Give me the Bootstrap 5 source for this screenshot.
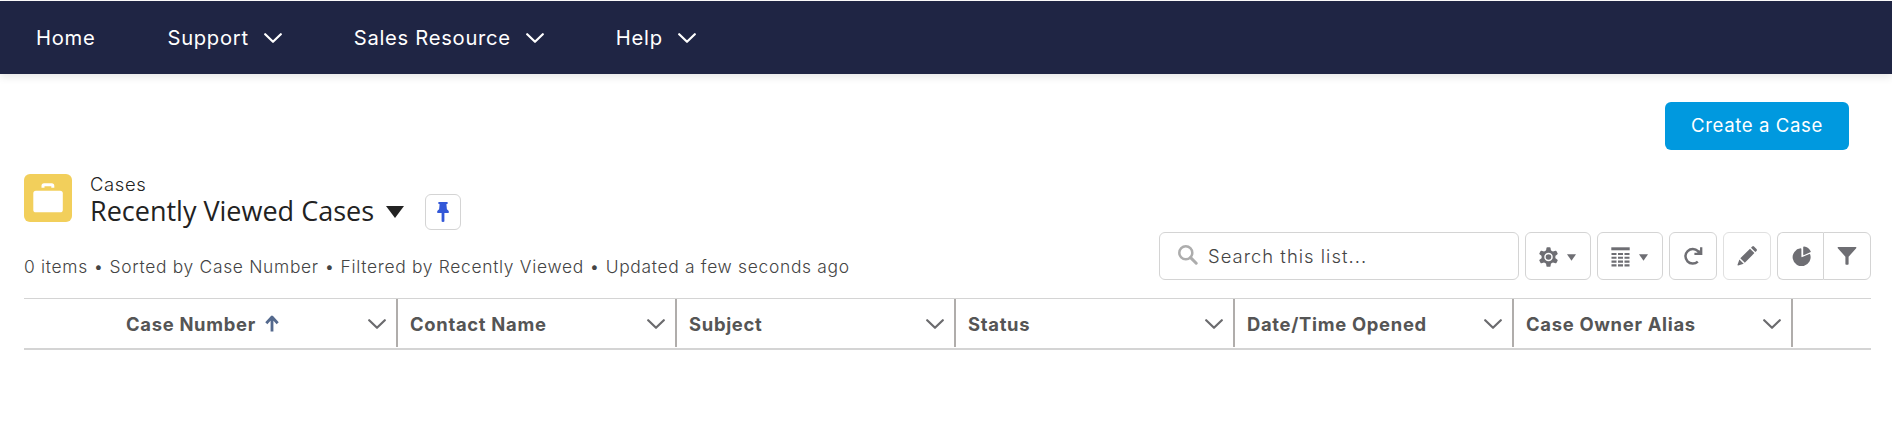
<!DOCTYPE html>
<html lang="en">
<head>
<meta charset="utf-8">
<meta name="viewport" content="width=device-width, initial-scale=1">
<title>Recently Viewed Cases</title>
<link href="https://cdn.jsdelivr.net/npm/bootstrap@5.3.0/dist/css/bootstrap.min.css" rel="stylesheet">
<style>
body{font-family:"Inter","Liberation Sans",sans-serif;font-size:18px;line-height:24px;color:#222;background:#fff;padding-top:1px;overflow:hidden}
svg{display:block;flex:none}
.site-nav{height:73px;background:#1f2544;padding:0 0 0 36px;box-shadow:0 3px 8px rgba(0,0,0,.1)}
.site-nav .nav-link{color:#fff;font-size:20.2px;letter-spacing:.72px;padding:0;gap:15px}
.site-nav .nav-item{margin-right:72px}
.action-row{height:76px;padding:0 43px 0 0}
.btn-create{width:184px;height:48px;background:#0099df;color:#fff;border:0;border-radius:6px;font-size:18.6px;letter-spacing:.6px;padding:0}
.btn-create:hover{background:#0084c2;color:#fff}
.list-head{padding:0 21px 0 24px;height:148px}
.case-icon{width:48px;height:48px;border-radius:6px;background:#f2cf5b}
.entity{font-weight:300;font-size:18.4px;letter-spacing:.65px;line-height:22px;margin-top:-1px}
.view-title{font:400 27px/32px "Open Sans",sans-serif;letter-spacing:0;margin:-2px 0 0}
.tool{height:48px;border:1px solid #d4d4d4;border-radius:6px;background:#fff;padding:0;color:#6e6e73}
.pin-btn{width:36px;height:36px}
.meta-line{font-size:17.4px;font-weight:300;letter-spacing:.7px;color:#444;white-space:nowrap}
.search-box{width:360px;padding-left:18px}
.search-box span{font-weight:300;font-size:18.4px;letter-spacing:1.03px;color:#444}
.split .tool:first-child{width:46px;border-right:0;border-radius:6px 0 0 6px}
.split .tool:last-child{width:48px;border-radius:0 6px 6px 0}
.cols{margin:0 21px 0 24px;height:52px;border-top:1px solid #d4d4d4;border-bottom:2px solid #d4d4d4;color:#555;font-size:18.4px;font-weight:650;letter-spacing:.7px}
.cols svg{color:#6b6b6e}
.col-head{width:279px;height:48px;border-right:2px solid #b0adab;padding:1px 10px 0 12px}
.col-head.first-col{width:374px;padding-left:102px}
</style>
</head>
<body>
<nav class="site-nav d-flex align-items-center">
  <ul class="nav flex-nowrap">
    <li class="nav-item"><a class="nav-link" href="#">Home</a></li>
    <li class="nav-item"><a class="nav-link d-flex align-items-center" href="#">Support <svg width="18" height="12" viewBox="0 0 18 12"><use href="#chev"/></svg></a></li>
    <li class="nav-item"><a class="nav-link d-flex align-items-center" href="#">Sales Resource <svg width="18" height="12" viewBox="0 0 18 12"><use href="#chev"/></svg></a></li>
    <li class="nav-item"><a class="nav-link d-flex align-items-center" href="#">Help <svg width="18" height="12" viewBox="0 0 18 12"><use href="#chev"/></svg></a></li>
  </ul>
</nav>
<svg width="0" height="0" class="position-absolute"><defs>
  <path id="chev" d="M1.2 2.2 L9 9.8 L16.8 2.2" fill="none" stroke="currentColor" stroke-width="2.2" stroke-linecap="round" stroke-linejoin="round"/>
</defs></svg>

<div class="action-row d-flex justify-content-end align-items-end">
  <button class="btn btn-create">Create a Case</button>
</div>

<header class="list-head d-flex justify-content-between">
  <div>
    <div class="d-flex pt-4">
      <div class="case-icon">
        <svg width="48" height="48" viewBox="0 0 48 48" fill="#fff"><path d="M17.5 13.8v-2q0-2.6 2.6-2.6h7.6q2.6 0 2.6 2.6v2h-3v-1.6h-6.8v1.6z"/><rect x="9.3" y="16.8" width="29.5" height="21.5" rx="2.6"/></svg>
      </div>
      <div style="margin-left:18px">
        <div class="entity">Cases</div>
        <div class="d-flex align-items-center" style="height:36px;margin-top:-1px">
          <h1 class="view-title">Recently Viewed Cases</h1>
          <svg width="18" height="12" viewBox="0 0 18 12" fill="#222" style="margin-left:12px"><path d="M0 0h18L9 12z"/></svg>
          <button class="btn tool pin-btn d-flex align-items-center justify-content-center" aria-label="Pin" style="margin-left:21px">
            <svg width="12" height="20" viewBox="0 0 12 20" fill="#3358d8"><path d="M2 0h8q.8 0 .8.9T10 2l-.6.3.5 5 1.4 1.1q.6.5.6 1.8 0 .8-.8.8H7.4v8.2q0 .8-1.4.8t-1.4-.8V11H.9q-.8 0-.8-.8 0-1.3.6-1.8l1.4-1.1.5-5L2 2q-.8-.2-.8-1.1T2 0z"/></svg>
          </button>
        </div>
      </div>
    </div>
    <div class="meta-line" style="margin-top:25px">0 items • Sorted by Case Number • Filtered by Recently Viewed • Updated a few seconds ago</div>
  </div>
  <div class="d-flex align-items-end" style="gap:6px;padding-bottom:18px">
    <div class="tool search-box d-flex align-items-center">
      <svg width="20" height="20" viewBox="0 0 20 20" fill="none" stroke="#adadad" stroke-width="2.5" style="margin-top:-2px"><circle cx="7.8" cy="7.8" r="6.5"/><path d="M12.6 12.6l5.6 5.6" stroke-width="3" stroke-linecap="round"/></svg>
      <span style="margin-left:10px;margin-top:-1px">Search this list...</span>
    </div>
    <button class="btn tool d-flex align-items-center" aria-label="List controls" style="width:66px;padding:2px 0 0 13px;gap:9px">
      <svg width="19" height="20" viewBox="-9.5 -10 19 20" fill="currentColor"><circle r="5.6" fill="none" stroke="currentColor" stroke-width="2.7"/><circle r="2.8"/><g id="teeth"><path id="tooth" d="M-2-9.2q.2-.6.8-.6h2.4q.6 0 .8.6l.6 3.4h-5.2z"/><use href="#tooth" transform="rotate(60)"/><use href="#tooth" transform="rotate(120)"/></g><use href="#teeth" transform="rotate(180)"/></svg>
      <svg width="9" height="7" viewBox="0 0 9 7" fill="currentColor"><path d="M0 .3h9L4.5 6.7z"/></svg>
    </button>
    <button class="btn tool d-flex align-items-center" aria-label="Display as" style="width:66px;padding:2px 0 0 13px;gap:9px">
      <svg width="19" height="20" viewBox="0 0 19 20" fill="none" stroke="currentColor"><path d="M.3 1.8h18.4" stroke-width="3"/><path d="M.5 7h18M.5 10.8h18M.5 14.6h18M.5 18.4h18" stroke-width="2.1" stroke-dasharray="5 1.5"/></svg>
      <svg width="9" height="7" viewBox="0 0 9 7" fill="currentColor"><path d="M0 .3h9L4.5 6.7z"/></svg>
    </button>
    <button class="btn tool d-flex align-items-center justify-content-center" aria-label="Refresh" style="width:48px">
      <svg width="20" height="20" viewBox="0 0 20 20" fill="none" stroke="currentColor" stroke-width="2.5"><path d="M14.8 15.6A7.3 7.3 0 1 1 15 5.2l2 2"/><path d="M18.2 1.2v6.6h-6.8" stroke-width="2.3"/><path d="M17.5 3.5v4h-4z" fill="currentColor" stroke="none"/></svg>
    </button>
    <button class="btn tool d-flex align-items-center justify-content-center" aria-label="Edit" style="width:48px;border-color:#e0e0e0">
      <svg width="20" height="20" viewBox="0 0 20 20" fill="currentColor"><path d="M3.3 12.3L13 2.7l4.4 4.4-9.6 9.6zM14 1.7L15.2.5q.9-.8 1.8 0l2.5 2.5q.9.9 0 1.9l-1.2 1.2zM2.4 13.4l4.3 4.3-5.5 1.8q-.9.1-.7-.7z"/></svg>
    </button>
    <div class="split d-flex">
      <button class="btn tool d-flex align-items-center justify-content-center" aria-label="Show charts">
        <svg width="20" height="20" viewBox="0 0 20 20" fill="currentColor" style="margin-left:2px"><path d="M8.6 2.3q.8 0 .8.8v7.4q0 1 .9.6l7-3.1q.7-.3.9.5A9 9 0 1 1 8.6 2.3z"/><path d="M11.2 1.3q0-.9.9-.8 4.6.7 6.6 4.8.3.7-.4 1l-6.2 2.8q-.9.4-.9-.5z"/></svg>
      </button>
      <button class="btn tool d-flex align-items-center justify-content-center" aria-label="Show filters">
        <svg width="20" height="20" viewBox="0 0 20 20" fill="currentColor"><path d="M1.2 1h17.6q1 .3.4 1.2l-7.6 8.5V18q0 .8-.8.8H9.2q-.8 0-.8-.8v-7.3L.8 2.2Q.2 1.3 1.2 1z"/></svg>
      </button>
    </div>
  </div>
</header>

<div class="cols d-flex">
  <div class="col-head first-col d-flex align-items-center"><span>Case Number</span>
    <svg width="14" height="17" viewBox="0 0 14 17" fill="none" stroke="#54698d" stroke-width="2.8" stroke-linejoin="round" style="margin-left:9px"><path d="M7 16.5V2M1.3 8.3L7 2l5.7 6.3"/></svg>
    <svg class="ms-auto" width="18" height="12" viewBox="0 0 18 12"><use href="#chev"/></svg></div>
  <div class="col-head d-flex align-items-center justify-content-between"><span>Contact Name</span><svg width="18" height="12" viewBox="0 0 18 12"><use href="#chev"/></svg></div>
  <div class="col-head d-flex align-items-center justify-content-between"><span>Subject</span><svg width="18" height="12" viewBox="0 0 18 12"><use href="#chev"/></svg></div>
  <div class="col-head d-flex align-items-center justify-content-between"><span>Status</span><svg width="18" height="12" viewBox="0 0 18 12"><use href="#chev"/></svg></div>
  <div class="col-head d-flex align-items-center justify-content-between"><span>Date/Time Opened</span><svg width="18" height="12" viewBox="0 0 18 12"><use href="#chev"/></svg></div>
  <div class="col-head d-flex align-items-center justify-content-between"><span>Case Owner Alias</span><svg width="18" height="12" viewBox="0 0 18 12"><use href="#chev"/></svg></div>
</div>
<script src="https://cdn.jsdelivr.net/npm/bootstrap@5.3.0/dist/js/bootstrap.bundle.min.js"></script>
</body>
</html>
